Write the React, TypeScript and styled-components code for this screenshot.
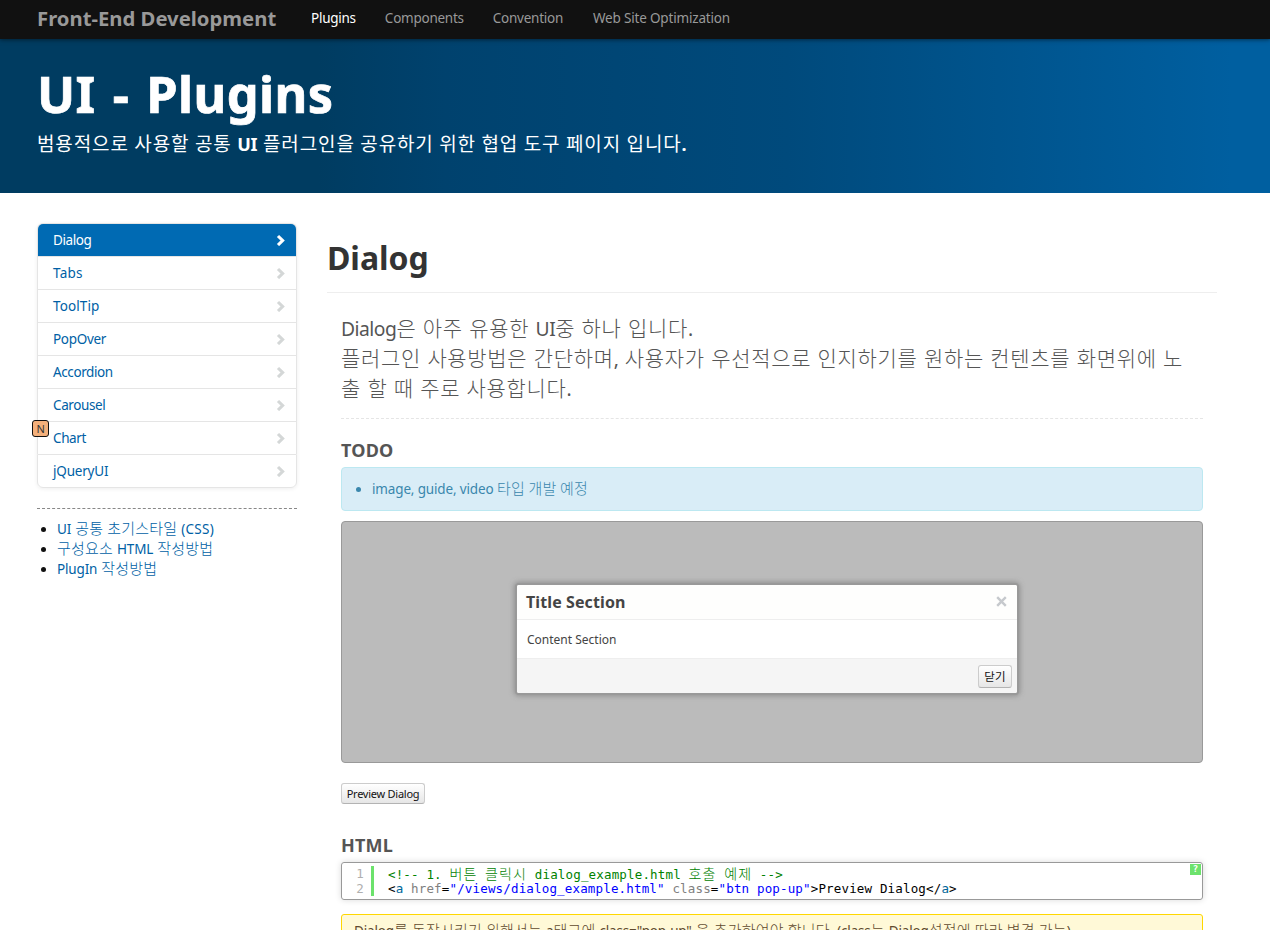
import React from "react";
import styled, { createGlobalStyle } from "styled-components";

const GlobalStyle = createGlobalStyle`
  * { box-sizing: border-box; }
  html, body { margin: 0; height: 930px; overflow: hidden; background: #fff; }
  body {
    font-family: "Noto Sans", "Noto Sans CJK KR", sans-serif;
    font-size: 13.5px;
    line-height: 20px;
    letter-spacing: -0.15px;
    color: #333;
    white-space: nowrap;
  }
  h1, h2, h3, p, ul { margin: 0; padding: 0; }
  a { color: inherit; text-decoration: none; }
`;

const Ko = styled.span<{ $weight?: number; $size?: number; $track?: number }>`
  font-family: "Noto Sans CJK KR", sans-serif;
  font-weight: ${(p) => p.$weight ?? 300};
  font-size: ${(p) => p.$size ?? 15}px;
  letter-spacing: ${(p) => p.$track ?? 0.013}em;
  line-height: 1;
`;

const LeadKo = styled(Ko)`
  font-weight: 400;
  font-size: 19px;
  letter-spacing: 0.046em;
  word-spacing: 0.4px;
`;

const IntroKo = styled(Ko)`
  font-size: 21px;
  letter-spacing: 0.032em;
  word-spacing: 1.1px;
`;

const CodeKo = styled(Ko)`
  font-size: 14px;
  letter-spacing: 0.08em;
  word-spacing: 3.4px;
`;

const Tracked = styled.span<{ $px: number }>`
  letter-spacing: ${(p) => p.$px}px;
`;

const Navbar = styled.nav`
  position: relative;
  z-index: 1;
  display: flex;
  height: 39px;
  padding-left: 37px;
  background: #111;
  box-shadow: 0 1px 3px rgba(0, 0, 0, 0.25), 0 0 6px rgba(0, 0, 0, 0.35);
  color: #999;
`;

const Brand = styled.a`
  width: 274px;
  font-size: 20.3px;
  font-weight: 700;
  line-height: 37px;
  letter-spacing: 0;
`;

const NavLink = styled.a<{ $active?: boolean }>`
  margin-right: 29px;
  line-height: 36px;
  letter-spacing: -0.25px;
  color: ${(p) => (p.$active ? "#fff" : "#999")};
  &:last-child { margin-left: 1px; letter-spacing: -0.18px; }
`;

const Jumbotron = styled.header`
  height: 154px;
  padding: 30px 0 0 37px;
  color: #fff;
  background: linear-gradient(90deg, #003c61 0%, #003c61 25%, #00426e 35%, #004a7c 62%, #005fa0 97%, #005fa0 100%);
`;

const SiteTitle = styled.h1`
  font-size: 50.5px;
  line-height: 50px;
  letter-spacing: 0.4px;
  word-spacing: 3.5px;
  -webkit-text-stroke: 0.7px #fff;
`;

const Lead = styled.p`
  margin-top: 14px;
  font-size: 18px;
  font-weight: 700;
  line-height: 22px;
`;

const Page = styled.div`
  display: flex;
  gap: 30px;
  padding: 30px 0 0 37px;
`;

const Sidebar = styled.aside`
  width: 260px;
`;

const Menu = styled.ul`
  list-style: none;
  border-radius: 6px;
  box-shadow: 0 1px 4px rgba(0, 0, 0, 0.065);
`;

const MenuItem = styled.li`
  position: relative;
  height: 33px;
  border: 1px solid #e5e5e5;
  border-bottom: 0;
  &:first-child { border-radius: 6px 6px 0 0; }
  &:last-child { height: 34px; border-bottom: 1px solid #e5e5e5; border-radius: 0 0 6px 6px; }
`;

const MenuLink = styled.a<{ $active?: boolean }>`
  display: flex;
  align-items: center;
  justify-content: space-between;
  height: 32px;
  padding: 0 10px 0 15px;
  border-radius: ${(p) => (p.$active ? "5px 5px 0 0" : "0")};
  color: ${(p) => (p.$active ? "#fff" : "#005fa5")};
  background: ${(p) => (p.$active ? "#006ab3" : "transparent")};
  svg { display: block; color: ${(p) => (p.$active ? "#fff" : "#d4d7d7")}; }
`;

const NewBadge = styled.span`
  position: absolute;
  left: -6px;
  top: -2px;
  width: 17px;
  height: 17px;
  border: 1px solid #111;
  border-radius: 3px;
  background: #f4b07b;
  color: #333;
  font-size: 11px;
  line-height: 15px;
  text-align: center;
`;

const DocLinks = styled.ul`
  margin-top: 20px;
  padding: 10px 0 0 20px;
  border-top: 1px dashed #888;
  color: #005fa5;
  word-spacing: 0.5px;
  li { height: 20px; list-style: disc; }
  li::marker { color: #111; }
`;

const Main = styled.main`
  width: 890px;
`;

const PageTitle = styled.h2`
  height: 70px;
  padding-top: 16px;
  border-bottom: 1px solid #eee;
  font-size: 32px;
  line-height: 38px;
  letter-spacing: -0.05px;
`;

const Content = styled.div`
  padding: 21px 14px 0;
  color: #555;
`;

const Intro = styled.p`
  height: 105px;
  border-bottom: 1px dashed #e5e5e5;
  font-size: 19.3px;
  line-height: 30px;
  letter-spacing: -0.5px;
`;

const SectionTitle = styled.h3<{ $top: number }>`
  margin-top: ${(p) => p.$top}px;
  font-size: 18px;
  line-height: 28px;
  letter-spacing: 0.2px;
`;

const InfoAlert = styled.ul`
  height: 44px;
  margin-top: 3px;
  padding: 11px 0 0 30px;
  border: 1px solid #bce8f1;
  border-radius: 4px;
  background: #d9edf7;
  color: #3a87ad;
`;

const Stage = styled.div`
  display: flex;
  justify-content: center;
  align-items: flex-start;
  height: 242px;
  margin-top: 10px;
  padding: 63px 10px 0 0;
  border: 1px solid #999;
  border-radius: 4px;
  background: #bbb;
`;

const Modal = styled.section`
  width: 500px;
  border-radius: 2px;
  overflow: hidden;
  background: #fff;
  color: #444;
  box-shadow: 0 0 0 2px #999, 0 0 5px 3px rgba(110, 110, 110, 0.55);
`;

const ModalHeader = styled.header`
  display: flex;
  align-items: center;
  justify-content: space-between;
  height: 35px;
  padding: 0 10px 1px 9px;
  border-bottom: 1px solid #eee;
  background: #fefefd;
  font-size: 16px;
  font-weight: 700;
  letter-spacing: 0.1px;
`;

const ModalBody = styled.div`
  height: 38px;
  padding: 10px 10px;
  font-size: 12px;
  letter-spacing: 0;
`;

const ModalFooter = styled.footer`
  display: flex;
  justify-content: flex-end;
  height: 35px;
  padding: 6px 5px;
  border-top: 1px solid #eee;
  background: #f5f5f5;
`;

const Button = styled.button<{ $w: number; $h: number }>`
  display: block;
  width: ${(p) => p.$w}px;
  height: ${(p) => p.$h}px;
  padding: 0;
  border: 1px solid #ccc;
  border-bottom-color: #b3b3b3;
  border-radius: 3px;
  background: linear-gradient(#fff, #e6e6e6);
  color: #111;
  font-family: inherit;
  font-size: 11px;
  line-height: 18px;
  letter-spacing: -0.25px;
`;

const PreviewRow = styled.div`
  margin-top: 20px;
`;

const Code = styled.div`
  position: relative;
  display: flex;
  height: 38px;
  margin-top: 3px;
  padding-top: 3px;
  border: 1px solid #999;
  border-radius: 3px;
  box-shadow: 0 0 6px rgba(0, 0, 0, 0.15);
  font-family: "DejaVu Sans Mono", monospace;
  font-size: 12.5px;
  line-height: 15px;
  letter-spacing: 0.16px;
  white-space: pre;
`;

const Gutter = styled.div`
  width: 32px;
  height: 30px;
  padding-right: 7px;
  border-right: 3px solid #6ce26c;
  color: #afafaf;
  text-align: right;
`;

const Source = styled.div`
  padding-left: 14px;
  color: #000;
`;

const CodeLine = styled.div`
  height: 15px;
`;

const Comment = styled.span`
  color: #008200;
`;
const Tag = styled.span`
  color: #069;
`;
const Attr = styled.span`
  color: #808080;
`;
const Str = styled.span`
  color: #00f;
`;

const Help = styled.span`
  position: absolute;
  top: 1px;
  right: 1px;
  width: 11px;
  height: 11px;
  background: #6ce26c;
  color: #fff;
  font-size: 9px;
  font-weight: 700;
  line-height: 11px;
  text-align: center;
`;

const Note = styled.div`
  height: 60px;
  margin-top: 14px;
  padding: 6px 12px;
  border: 1px solid #ffd700;
  border-radius: 3px;
  background: #fff9d7;
  color: #604a2e;
  word-spacing: 0.5px;
`;

const Chevron = () => (
  <svg width="10" height="12" viewBox="0 -0.5 10 12" fill="none">
    <path d="M2 1.5 6.6 6 2 10.5" stroke="currentColor" strokeWidth="3.1" />
  </svg>
);

const Close = () => (
  <svg width="11" height="11" viewBox="0 0 11 11">
    <path d="M1.2 1.2 9.8 9.8M9.8 1.2 1.2 9.8" stroke="#c6c9cd" strokeWidth="2.4" />
  </svg>
);

const menu: { label: string; track: number; isNew?: boolean }[] = [
  { label: "Dialog", track: -0.4 },
  { label: "Tabs", track: 0.25 },
  { label: "ToolTip", track: 0.1 },
  { label: "PopOver", track: -0.3 },
  { label: "Accordion", track: -0.4 },
  { label: "Carousel", track: -0.4 },
  { label: "Chart", track: -0.4, isNew: true },
  { label: "jQueryUI", track: -0.2 },
];

export default function App() {
  return (
    <>
      <GlobalStyle />
      <Navbar>
        <Brand>Front-End Development</Brand>
        <NavLink $active>Plugins</NavLink>
        <NavLink>Components</NavLink>
        <NavLink>Convention</NavLink>
        <NavLink>Web Site Optimization</NavLink>
      </Navbar>
      <Jumbotron>
        <SiteTitle>UI - Plugins</SiteTitle>
        <Lead>
          <LeadKo>범용적으로 사용할 공통 </LeadKo>
          UI
          <LeadKo> 플러그인을 공유하기 위한 협업 도구 페이지 입니다</LeadKo>.
        </Lead>
      </Jumbotron>
      <Page>
        <Sidebar>
          <Menu>
            {menu.map((m, i) => (
              <MenuItem key={m.label}>
                <MenuLink $active={i === 0}>
                  <Tracked $px={m.track}>{m.label}</Tracked>
                  <Chevron />
                </MenuLink>
                {m.isNew && <NewBadge>N</NewBadge>}
              </MenuItem>
            ))}
          </Menu>
          <DocLinks>
            <li><a>UI<Ko> 공통 초기스타일 </Ko><Tracked $px={0.3}>(CSS)</Tracked></a></li>
            <li><a><Ko>구성요소 </Ko>HTML<Ko> 작성방법</Ko></a></li>
            <li><a>PlugIn<Ko> 작성방법</Ko></a></li>
          </DocLinks>
        </Sidebar>
        <Main>
          <PageTitle>Dialog</PageTitle>
          <Content>
            <Intro>
              Dialog<IntroKo>은 아주 유용한 </IntroKo>UI<IntroKo>중 하나 입니다</IntroKo>.<br />
              <IntroKo>플러그인 사용방법은 간단하며</IntroKo>,
              <IntroKo> 사용자가 우선적으로 인지하기를 원하는 컨텐츠를 화면위에 노</IntroKo><br />
              <IntroKo>출 할 때 주로 사용합니다</IntroKo>.
            </Intro>
            <SectionTitle $top={17}>TODO</SectionTitle>
            <InfoAlert>
              <li>image, guide, video<Ko> 타입 개발 예정</Ko></li>
            </InfoAlert>
            <Stage>
              <Modal>
                <ModalHeader>Title Section<Close /></ModalHeader>
                <ModalBody>Content Section</ModalBody>
                <ModalFooter>
                  <Button $w={34} $h={23}><Ko $weight={400} $size={11.5}>닫기</Ko></Button>
                </ModalFooter>
              </Modal>
            </Stage>
            <PreviewRow>
              <Button $w={84} $h={21}>Preview Dialog</Button>
            </PreviewRow>
            <SectionTitle $top={27}>HTML</SectionTitle>
            <Code>
              <Gutter>{"1\n2"}</Gutter>
              <Source>
                <CodeLine>
                  <Comment>{"<!-- 1. "}<CodeKo>버튼 클릭시</CodeKo>{" dialog_example.html "}<CodeKo>호출 예제</CodeKo>{" -->"}</Comment>
                </CodeLine>
                <CodeLine>
                  {"<"}<Tag>a</Tag> <Attr>href</Attr>=<Str>"/views/dialog_example.html"</Str> <Attr>class</Attr>=<Str>"btn pop-up"</Str>{">Preview Dialog</"}<Tag>a</Tag>{">"}
                </CodeLine>
              </Source>
              <Help>?</Help>
            </Code>
            <Note>
              Dialog<Ko>를 동작시키기 위해서는 </Ko>a<Ko>태그에 </Ko>class="pop-up"<Ko> 을 추가하여야 합니다</Ko>. (class<Ko>는 </Ko>Dialog<Ko>설정에 따라 변경 가능</Ko>)
            </Note>
          </Content>
        </Main>
      </Page>
    </>
  );
}
